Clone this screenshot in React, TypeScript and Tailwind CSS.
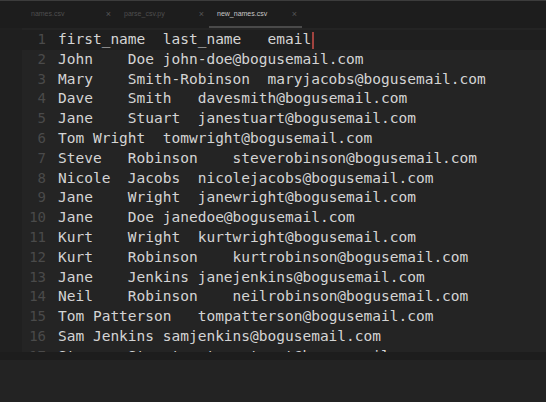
import React from "react";

const lines = [
  "first_name\tlast_name\temail",
  "John\tDoe john-doe@bogusemail.com",
  "Mary\tSmith-Robinson\tmaryjacobs@bogusemail.com",
  "Dave\tSmith\tdavesmith@bogusemail.com",
  "Jane\tStuart\tjanestuart@bogusemail.com",
  "Tom Wright\ttomwright@bogusemail.com",
  "Steve\tRobinson\tsteverobinson@bogusemail.com",
  "Nicole\tJacobs\tnicolejacobs@bogusemail.com",
  "Jane\tWright\tjanewright@bogusemail.com",
  "Jane\tDoe janedoe@bogusemail.com",
  "Kurt\tWright\tkurtwright@bogusemail.com",
  "Kurt\tRobinson\tkurtrobinson@bogusemail.com",
  "Jane\tJenkins janejenkins@bogusemail.com",
  "Neil\tRobinson\tneilrobinson@bogusemail.com",
  "Tom Patterson\ttompatterson@bogusemail.com",
  "Sam Jenkins samjenkins@bogusemail.com",
  "Steve\tStuart\tstevestuart@bogusemail.com",
];

const tabs = [
  { name: "names.csv", active: false },
  { name: "parse_csv.py", active: false },
  { name: "new_names.csv", active: true },
];

function Tab({ name, active }: { name: string; active: boolean }) {
  return (
    <div className="relative flex h-full w-[93px] items-center justify-between pl-2 pr-[5px]">
      <span
        className={`text-[7px] ${active ? "text-[#c8c8c8]" : "text-[#4e4e4e]"}`}
      >
        {name}
      </span>
      <span className="text-[9px] leading-none text-[#555]">×</span>
      {active && (
        <div className="absolute bottom-0 left-0 h-[2px] w-full bg-[#4a4a4a]" />
      )}
    </div>
  );
}

export default function App() {
  return (
    <div className="flex h-[402px] w-[546px] flex-col overflow-hidden bg-[#202020] font-['DejaVu_Sans_Mono',monospace]">
      <div className="flex h-[28px] shrink-0 border-t border-[#3c3c3c] bg-[#1d1d1d] pl-[23px] font-['Liberation_Sans',sans-serif]">
        {tabs.map((t) => (
          <Tab key={t.name} name={t.name} active={t.active} />
        ))}
      </div>

      <div className="h-[324px] shrink-0 overflow-hidden pl-[22px]">
        <div className="h-full bg-[#242424] pt-[2px]">
          {lines.map((line, i) => (
            <div
              key={i}
              className={`flex h-[19.8px] items-center leading-[19.8px] ${
                i === 0 ? "-ml-[22px] bg-[#1f1f1f] pl-[22px]" : ""
              }`}
            >
              <span className="w-[24px] text-right text-[14px] text-[#4a4a4a]">
                {i + 1}
              </span>
              <span className="ml-[12px] whitespace-pre text-[14.5px] text-[#d4d4d4] [tab-size:4]">
                {line}
                {i === 0 && (
                  <span className="ml-[1px] inline-block h-[17px] w-[1.5px] align-middle bg-[#a0433f]" />
                )}
              </span>
            </div>
          ))}
        </div>
      </div>

      <div className="h-[8px] shrink-0 bg-[#1d1d1d]" />
      <div className="flex-1 bg-[#232323]" />
    </div>
  );
}
